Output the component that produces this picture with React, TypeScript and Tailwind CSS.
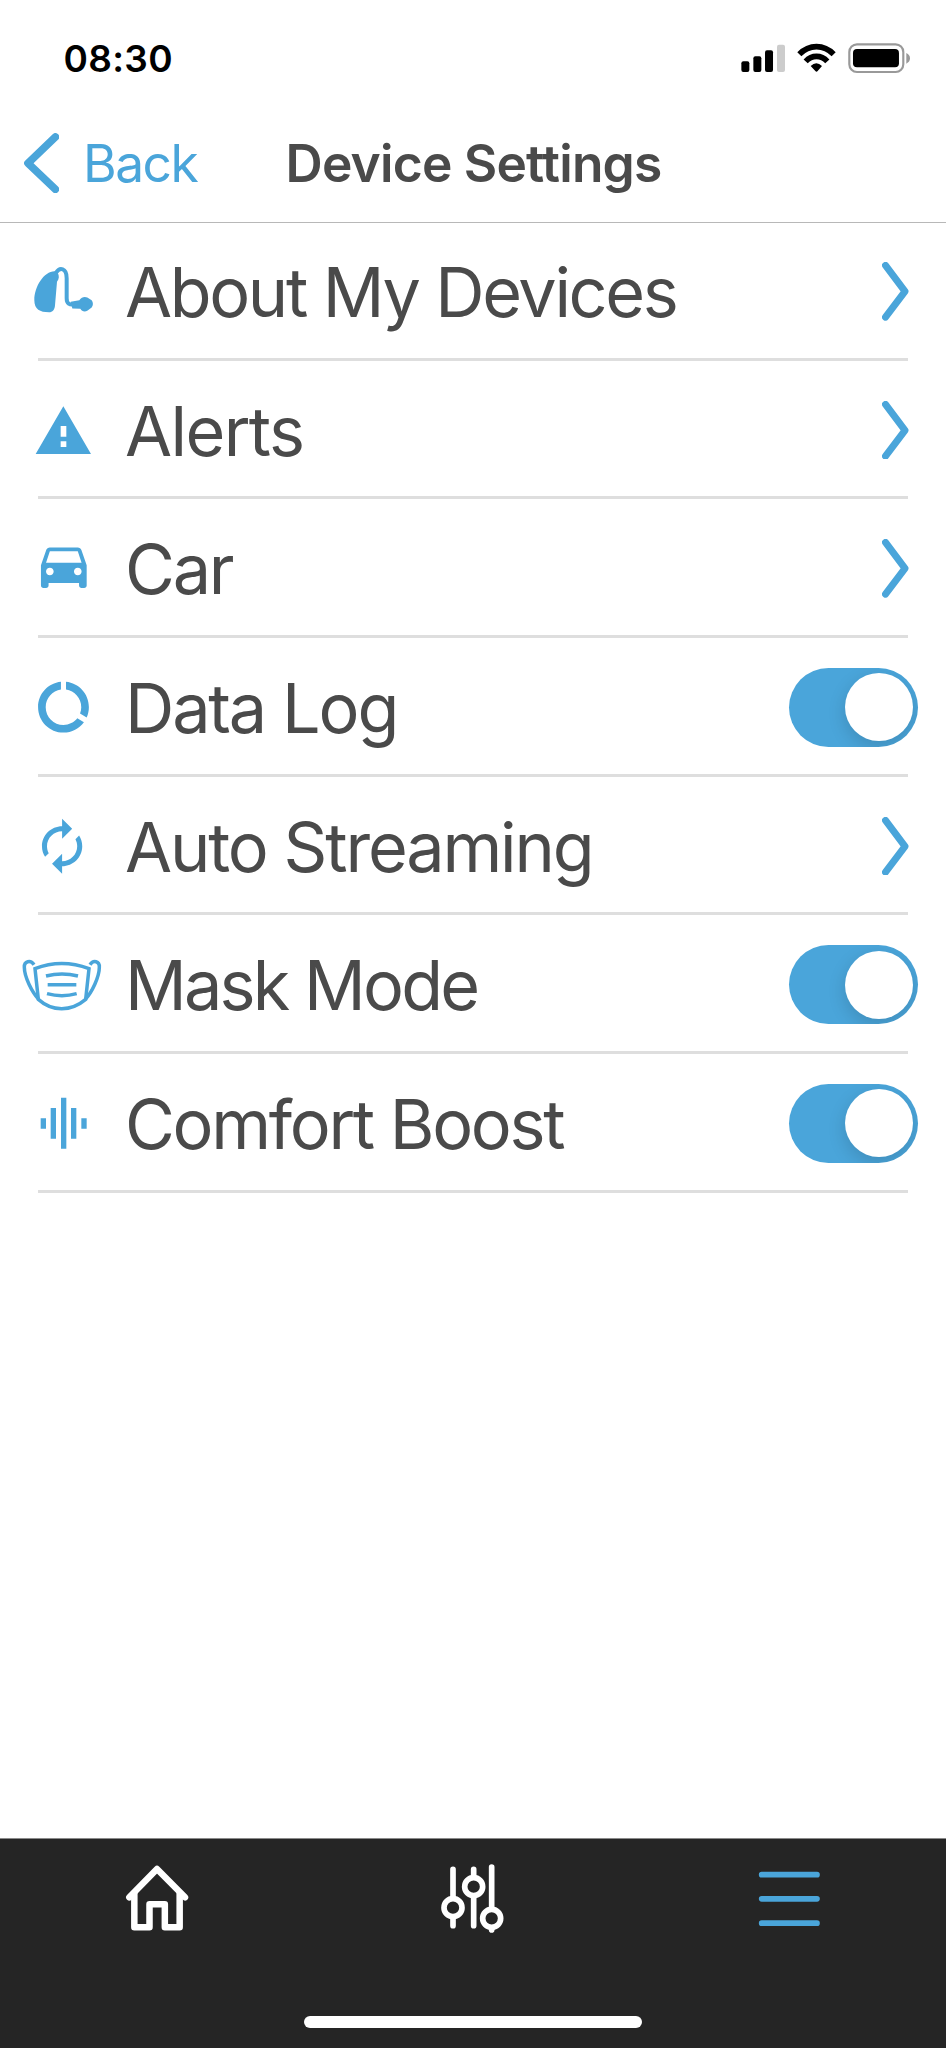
import type { ReactNode } from "react";

const BLUE = "#4aa5da";

type Row = {
  label: string;
  tracking: string;
  icon: ReactNode;
  viewBox: string;
  control: "chevron" | "switch";
};

const rows: Row[] = [
  {
    label: "About My Devices",
    tracking: "tracking-[-2.35px]",
    viewBox: "60 93.6 252 180",
    control: "chevron",
    icon: (
      <>
        <path
          d="M170 125C136 118 103 168 103 211C103 238 120 247 147 247C158 247 164 240 165 226L171 156C178 147 178 138 173 129Z"
          fill={BLUE}
        />
        <path
          d="M168 129C179 111 200 114 200 145V205C200 221 208 226 224 223"
          fill="none"
          stroke={BLUE}
          strokeWidth="12"
        />
        <path
          d="M212 216L238 211C245 202 253 199 262 203L275 211C280 218 280 226 275 233L263 242C254 248 246 245 241 237L217 236Z"
          fill={BLUE}
        />
      </>
    ),
  },
  {
    label: "Alerts",
    tracking: "tracking-[-1.6px]",
    viewBox: "60 510 252 180",
    control: "chevron",
    icon: (
      <path
        d="M190 529L273 672H107ZM182 588V620H199V588ZM182 634V651H199V634Z"
        fill={BLUE}
        fillRule="evenodd"
      />
    ),
  },
  {
    label: "Car",
    tracking: "tracking-[-2.2px]",
    viewBox: "60 115.8 252 180",
    control: "chevron",
    icon: (
      <path
        transform="translate(100 103) scale(7.62)"
        d="M18.92 6.01C18.72 5.42 18.16 5 17.5 5h-11c-.66 0-1.21.42-1.42 1.01L3 12v8c0 .55.45 1 1 1h1c.55 0 1-.45 1-1v-1h12v1c0 .55.45 1 1 1h1c.55 0 1-.45 1-1v-8l-2.08-5.99zM6.5 16c-.83 0-1.5-.67-1.5-1.5S5.67 13 6.5 13s1.5.67 1.5 1.5S7.33 16 6.5 16zm11 0c-.83 0-1.5-.67-1.5-1.5s.67-1.5 1.5-1.5 1.5.67 1.5 1.5-.67 1.5-1.5 1.5zM5 11l1.5-4.5h11L19 11H5z"
        fill={BLUE}
      />
    ),
  },
  {
    label: "Data Log",
    tracking: "tracking-[-2.15px]",
    viewBox: "60 532 252 180",
    control: "switch",
    icon: (
      <path
        transform="translate(99 531) scale(7.62)"
        d="M13 2.05v3.03c3.39.49 6 3.39 6 6.92 0 .9-.18 1.75-.48 2.54l2.6 1.53c.56-1.24.88-2.62.88-4.07 0-5.18-3.95-9.45-9-9.95zM12 19c-3.87 0-7-3.13-7-7 0-3.53 2.61-6.43 6-6.92V2.05c-5.06.5-9 4.76-9 9.95 0 5.52 4.47 10 9.99 10 3.31 0 6.24-1.61 8.06-4.09l-2.6-1.53C16.17 17.98 14.21 19 12 19z"
        fill={BLUE}
      />
    ),
  },
  {
    label: "Auto Streaming",
    tracking: "tracking-[-2.15px]",
    viewBox: "60 78 252 180",
    control: "chevron",
    icon: (
      <path
        transform="translate(95.7 78.5) scale(7.55 7.5)"
        d="M12 6v3l4-4-4-4v3c-4.42 0-8 3.58-8 8 0 1.57.46 3.03 1.24 4.26L6.7 14.8c-.45-.83-.7-1.79-.7-2.8 0-3.31 2.69-6 6-6zm6.76 1.74L17.3 9.2c.44.84.7 1.79.7 2.8 0 3.31-2.69 6-6 6v-3l-4 4 4 4v-3c4.42 0 8-3.58 8-8 0-1.57-.46-3.03-1.24-4.26z"
        fill={BLUE}
      />
    ),
  },
  {
    label: "Mask Mode",
    tracking: "tracking-[-2.75px]",
    viewBox: "60 494 252 180",
    control: "switch",
    icon: (
      <g fill="none" stroke={BLUE} strokeWidth="10.5">
        <path d="M105 535Q185 504 267 535L257 627Q224 655 185 655Q146 655 115 627Z" />
        <path d="M102 523C92 508 72 512 73 531C73 560 96 605 116 627" />
        <path d="M270 523C280 508 299 512 298 531C298 560 276 605 256 627" />
        <path d="M138 557Q186 545 234 557M143 583.5H229M141 610Q186 622 230 610" />
      </g>
    ),
  },
  {
    label: "Comfort Boost",
    tracking: "tracking-[-2.3px]",
    viewBox: "60 100 252 180",
    control: "switch",
    icon: (
      <path
        d="M122 176h16v31h-16zM152 145h16v92h-16zM183 114h16v153h-16zM213 145h16v92h-16zM244 176h16v31h-16z"
        fill={BLUE}
      />
    ),
  },
];

function StatusBar() {
  return (
    <div className="flex h-[104px] items-center justify-between pt-[12px] pr-[34px] pl-[63.5px]">
      <span className="text-[37px] leading-none font-semibold tracking-[0.3px] text-black">08:30</span>
      <svg className="h-[31.67px] w-[171.67px]" viewBox="120 65 515 95">
        <rect x="124" y="123" width="24" height="32" rx="6" />
        <rect x="160" y="108" width="24" height="47" rx="6" />
        <rect x="195" y="90" width="24" height="65" rx="6" />
        <rect x="231" y="73" width="24" height="82" rx="6" fill="#cccccc" />
        <g fill="none" stroke="#000" strokeWidth="17">
          <path d="M298 102Q320 79 349.500 79T401 102" />
          <path d="M317 123Q331 108 349.500 108T382 123" />
        </g>
        <path d="M332 137Q349 120 366 137L353 152Q349.500 156 346 152Z" />
        <rect x="448" y="72" width="162" height="83" rx="23" fill="none" stroke="#999" strokeWidth="6.5" />
        <rect x="459" y="86" width="138" height="55" rx="12" />
        <path d="M619 98Q630 103 630 114T619 130Z" fill="#999" />
      </svg>
    </div>
  );
}

function NavBar() {
  return (
    <div className="grid h-[119px] grid-cols-[285.5px_1fr] items-center border-b border-[#b8b8b8] text-[51.5px] leading-none">
      <button className="flex items-center gap-[24px] pl-[24px] text-[#4aa5da]">
        <svg className="h-[60px] w-[35px]" viewBox="72 339 105 180">
          <path
            d="M166 351L84 429.500L166 508"
            fill="none"
            stroke={BLUE}
            strokeWidth="23"
            strokeLinecap="round"
            strokeLinejoin="round"
          />
        </svg>
        <span className="pt-[1px] tracking-[-1.5px]">Back</span>
      </button>
      <h1 className="pt-[1px] font-semibold tracking-[-0.8px] whitespace-nowrap text-[#4a4a4a]">
        Device Settings
      </h1>
    </div>
  );
}

function Chevron() {
  return (
    <svg className="mr-[37.4px] h-[58.67px] w-[27px]" viewBox="364 95.6 81 176">
      <path
        d="M374.500 106L433 183.600L374.500 261"
        fill="none"
        stroke={BLUE}
        strokeWidth="21"
        strokeLinecap="round"
        strokeLinejoin="round"
      />
    </svg>
  );
}

function Switch() {
  return (
    <div className="mr-[28px] flex h-[78.6px] w-[129px] items-center justify-end overflow-hidden rounded-full bg-[#4aa5da] pr-[5px]">
      <div className="size-[68px] rounded-full bg-white shadow-[0_6px_18px_rgba(0,0,0,0.15)]" />
    </div>
  );
}

function SettingsRow({ row }: { row: Row }) {
  return (
    <li className="flex h-[138.7px] flex-col">
      <div className="-mb-[3px] flex flex-1 items-center">
        <svg className="mr-[21px] ml-[20px] h-[60px] w-[84px] shrink-0" viewBox={row.viewBox}>
          {row.icon}
        </svg>
        <span
          className={`flex-1 pt-[1.5px] text-[68.3px] leading-none whitespace-nowrap text-[#4a4a4a] ${row.tracking}`}
        >
          {row.label}
        </span>
        {row.control === "chevron" ? <Chevron /> : <Switch />}
      </div>
      <div className="mr-[38px] ml-[38px] h-[3px] shrink-0 bg-[#dedede]" />
    </li>
  );
}

function TabBar() {
  return (
    <nav className="flex h-[210px] flex-col items-center justify-between border-t border-[#8a8a8a] bg-[#252525] pt-[24.3px] pb-[20.5px]">
      <div className="grid w-full grid-cols-3 justify-items-center">
        <svg
          className="size-[70px]"
          viewBox="98 130 210 210"
          fill="none"
          stroke="#fff"
          strokeWidth="19.5"
          strokeLinecap="round"
          strokeLinejoin="round"
        >
          <path d="M117 233L200 148L284 233" />
          <path d="M132 222V323H177.500V254H223.500V323H268V222" />
        </svg>
        <svg
          className="size-[70px]"
          viewBox="84 130 210 210"
          fill="#252525"
          stroke="#fff"
          strokeWidth="17"
          strokeLinecap="round"
        >
          <path d="M129 149V318M191 149V318M245 142V331" />
          <circle cx="129" cy="264" r="27" />
          <circle cx="191" cy="201" r="27" />
          <circle cx="245" cy="296" r="27" />
        </svg>
        <svg
          className="size-[70px]"
          viewBox="100 130 210 210"
          stroke={BLUE}
          strokeWidth="17"
          strokeLinecap="round"
        >
          <path d="M126 165H292M126 237.500H292M126 310.500H292" />
        </svg>
      </div>
      <div className="h-[12px] w-[338px] rounded-full bg-white" />
    </nav>
  );
}

export default function App() {
  return (
    <div className="flex h-[2048px] w-[946px] flex-col bg-white font-['Inter',sans-serif]">
      <StatusBar />
      <NavBar />
      <ul className="-mt-[1px] flex-1">
        {rows.map((row) => (
          <SettingsRow key={row.label} row={row} />
        ))}
      </ul>
      <TabBar />
    </div>
  );
}
